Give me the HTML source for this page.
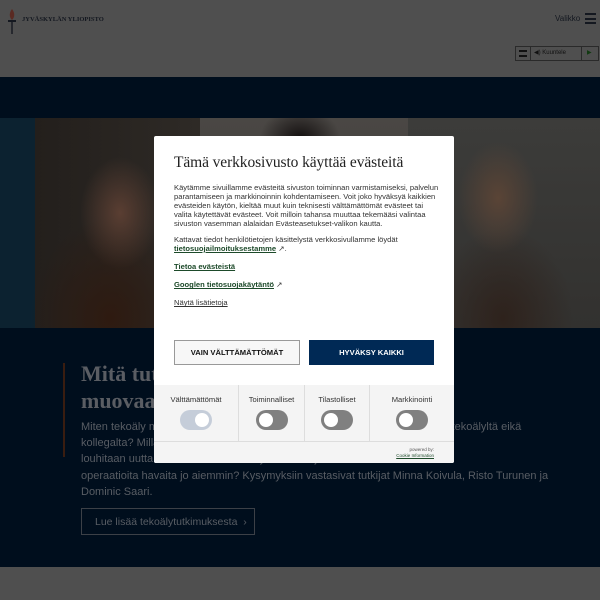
<!DOCTYPE html>
<html><head><meta charset="utf-8"><style>
*{margin:0;padding:0;box-sizing:border-box}
body{width:600px;height:600px;overflow:hidden;position:relative;font-family:"Liberation Sans",sans-serif;background:#4f4f4f}
.hdr{position:absolute;left:0;top:0;width:600px;height:77px;background:#4f4f4f}
.navy{position:absolute;left:0;top:77px;width:600px;height:490px;background:#000e1d}
.foot{position:absolute;left:0;top:567px;width:600px;height:33px;background:#4f4f4f}
.ph{position:absolute;top:118px;height:210px}
.p1{left:0;width:200px;background:radial-gradient(ellipse 50px 70px at 120px 95px,#5a3e32,transparent 80%),radial-gradient(ellipse 80px 100px at 110px 200px,#2e1a10,transparent),linear-gradient(90deg,#0c2230 0 35px,#231f1c 35px,#2e2a26)}
.p2{left:200px;width:208px;background:radial-gradient(ellipse 40px 30px at 100px 20px,#141010,transparent),linear-gradient(#4a4744,#3c3936)}
.p3{left:408px;width:192px;background:radial-gradient(ellipse 50px 70px at 90px 80px,#5a4436,transparent 80%),radial-gradient(ellipse 70px 90px at 95px 200px,#2e221c,transparent),linear-gradient(#3c3c3a,#32312f)}
.bar{position:absolute;left:63px;top:363px;width:2px;height:94px;background:#3a1d10}
.h2{position:absolute;left:81px;top:360px;font:bold 22px/27px "Liberation Serif",serif;color:#5a5d63}
.txt{position:absolute;left:81px;top:419px;width:480px;font:11px/16.2px "Liberation Sans",sans-serif;color:#585d64;white-space:nowrap}
.btn{position:absolute;left:81px;top:508px;width:174px;height:27px;border:1px solid #3c4047;color:#585d64;font-size:10.5px;padding:7px 13px;white-space:nowrap}
.modal{position:absolute;left:154px;top:136px;width:300px;height:327px;background:#fff;border-radius:2px;overflow:hidden}
.modal h1{position:absolute;left:20px;top:18px;font:15.5px "Liberation Serif",serif;color:#222;font-weight:normal;letter-spacing:-.1px}
.body{position:absolute;left:20px;top:47px;width:266px;font-size:7.6px;line-height:9.1px;color:#333}
.body p{margin-bottom:6.5px}
.body p.s{margin-bottom:9px}
.body a{color:#1d4a2a;font-weight:bold;text-decoration:underline}
.b1{position:absolute;left:20px;top:204px;width:126px;height:25px;border:1px solid #999;background:#f7f7f7;font-size:7.6px;font-weight:bold;color:#111;text-align:center;line-height:23px}
.b2{position:absolute;left:155px;top:204px;width:125px;height:25px;background:#002955;font-size:7.6px;font-weight:bold;color:#fff;text-align:center;line-height:25px}
.grey{position:absolute;left:0;top:249px;width:300px;height:78px;background:#f4f4f4}
.col{position:absolute;top:0;height:56px;border-right:1px solid #ddd;font-size:7.6px;color:#333;text-align:center;padding-top:10px}
.tg{width:32px;height:20px;border-radius:10px;background:#808080;margin:6px auto 0;position:relative}
.tg:after{content:"";position:absolute;left:3px;top:3px;width:14px;height:14px;border-radius:50%;background:#fff}
.tg.on{background:#c5cdd9}.tg.on:after{left:15px}
.line{position:absolute;left:0;top:56px;width:300px;border-top:1px solid #ddd}
.pw{position:absolute;right:20px;top:62px;font-size:4.5px;text-align:right;color:#555;line-height:6px}
</style></head><body>
<div class="hdr">
<svg style="position:absolute;left:8px;top:9px" width="8" height="25" viewBox="0 0 8 25"><path d="M4 0C1 4 1 8 4 11C7 8 7 4 4 0Z" fill="#5a2a22"/><rect x="0" y="11" width="8" height="2" fill="#141820"/><rect x="3.3" y="12" width="1.4" height="13" fill="#141820"/></svg>
<div style="position:absolute;left:22px;top:16px;font:bold 6.5px 'Liberation Serif',serif;color:#141820">JYVÄSKYLÄN YLIOPISTO</div>
<div style="position:absolute;left:555px;top:14px;font-size:8px;color:#141820">Valikko</div>
<div style="position:absolute;left:585px;top:13px;width:11px;height:11px;border-top:2px solid #141820;border-bottom:2px solid #141820"><div style="margin-top:2.5px;border-top:2px solid #141820"></div></div>
<div style="position:absolute;left:515px;top:46px;width:84px;height:15px;border:1px solid #2a2a2a;font-size:6px;color:#111">
<span style="position:absolute;left:3px;top:3px;width:8px;height:7px;border-top:2px solid #111;border-bottom:2px solid #111"></span>
<span style="position:absolute;left:14px;top:0;height:13px;border-left:1px solid #2a2a2a"></span>
<span style="position:absolute;left:18px;top:2px">◀) Kuuntele</span>
<span style="position:absolute;left:65px;top:0;height:13px;border-left:1px solid #2a2a2a"></span>
<span style="position:absolute;left:71px;top:2px;color:#103a10">▶</span></div>
</div>
<div class="navy"></div>
<div class="ph p1"></div><div class="ph p2"></div><div class="ph p3"></div>
<div class="bar"></div>
<div class="h2">Mitä tutkijat ajattelevat tekoälystä ja<br>muovaavat sen tulevaisuutta?</div>
<div class="txt">Miten tekoäly muuttaa työtä? Entä voiko tietoa erottaa kumpi on saatu enää tekoälyltä eikä<br>kollegalta? Millaisia uhkia tekoäly tuo mukanaan demokratiasta,<br>louhitaan uutta tietoa? Voisiko tekoäly auttaa torjumaan alkavia<br>operaatioita havaita jo aiemmin? Kysymyksiin vastasivat tutkijat Minna Koivula, Risto Turunen ja<br>Dominic Saari.</div>
<div class="btn">Lue lisää tekoälytutkimuksesta &nbsp;›</div>
<div class="foot"></div>
<div class="modal">
<h1>Tämä verkkosivusto käyttää evästeitä</h1>
<div class="body">
<p>Käytämme sivuillamme evästeitä sivuston toiminnan varmistamiseksi, palvelun parantamiseen ja markkinoinnin kohdentamiseen. Voit joko hyväksyä kaikkien evästeiden käytön, kieltää muut kuin teknisesti välttämättömät evästeet tai valita käytettävät evästeet. Voit milloin tahansa muuttaa tekemääsi valintaa sivuston vasemman alalaidan Evästeasetukset-valikon kautta.</p>
<p class="s">Kattavat tiedot henkilötietojen käsittelystä verkkosivullamme löydät <a>tietosuojailmoituksestamme</a> ↗.</p>
<p class="s"><a>Tietoa evästeistä</a></p>
<p class="s"><a>Googlen tietosuojakäytäntö</a> ↗</p>
<p><a style="color:#333;font-weight:normal">Näytä lisätietoja</a></p>
</div>
<div class="b1">VAIN VÄLTTÄMÄTTÖMÄT</div>
<div class="b2">HYVÄKSY KAIKKI</div>
<div class="grey">
<div class="col" style="left:0;width:85px">Välttämättömät<div class="tg on"></div></div>
<div class="col" style="left:85px;width:66px">Toiminnalliset<div class="tg"></div></div>
<div class="col" style="left:151px;width:65px">Tilastolliset<div class="tg"></div></div>
<div class="col" style="left:216px;width:84px;border:0">Markkinointi<div class="tg"></div></div>
<div class="line"></div>
<div class="pw">powered by:<br><u style="color:#1d4a2a">Cookie Information</u></div>
</div>
</div>
</body></html>
